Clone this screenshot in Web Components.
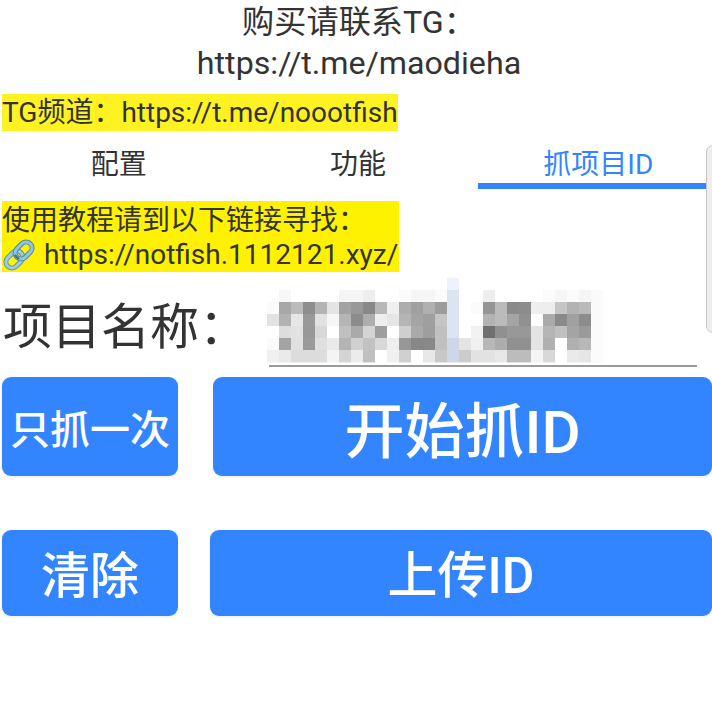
<!DOCTYPE html>
<html lang="zh"><head><meta charset="utf-8"><title>抓项目ID</title>
<style>
html,body{margin:0;padding:0;background:#fff;overflow:hidden;height:714px;width:712px}
body{font-family:Roboto,"Noto Sans CJK SC",sans-serif;color:#333}
</style></head><body>
<app-page>
  <app-banner>
    <span>购买请联系TG&#xFF1A;</span>
    <span>https://t.me/maodieha</span>
  </app-banner>
  <mark-line style="--fs:28px;--lh:37px;--bg:#fff223;margin-top:10px;">TG频道&#xFF1A;https://t.me/noootfish</mark-line>
  <tab-bar></tab-bar>
  <tutorial-note></tutorial-note>
  <name-field></name-field>
  <action-row style="--mt:11px;--h:99px;--w1:176px;--gap:35px;--fs1:40px;--fs2:60px;">
    <action-btn slot="a">只抓一次</action-btn>
    <action-btn slot="b">开始抓ID</action-btn>
  </action-row>
  <action-row style="--mt:54px;--h:86px;--w1:176px;--gap:32px;--fs1:49px;--fs2:50px;--pb:4px;">
    <action-btn slot="a">清除</action-btn>
    <action-btn slot="b">上传ID</action-btn>
  </action-row>
  <side-handle></side-handle>
</app-page>
<script>
function def(name, html, setup){
  customElements.define(name, class extends HTMLElement{
    constructor(){super();const r=this.attachShadow({mode:'open'});r.innerHTML=html;if(setup)setup(r,this);}
  });
}
def('app-page',`<style>:host{display:block;position:relative;width:712px;height:714px;overflow:hidden}</style><slot></slot>`);
def('app-banner',`<style>:host{display:flex;flex-direction:column;align-items:center;font-size:32.2px;line-height:41px;padding:2px 0 0 6px;color:#333}
::slotted(span){display:block;white-space:nowrap}</style><slot></slot>`);
def('mark-line',`<style>:host{display:block;padding-left:2px}
span{display:inline-block;background:var(--bg);font-size:var(--fs);line-height:var(--lh);white-space:nowrap;color:#333}</style><span><slot></slot></span>`);
def('tab-bar',`<style>:host{display:grid;grid-template-columns:repeat(3,239.33px);width:718px;height:58px;font-size:28px;margin-left:-1px}
div{display:flex;align-items:center;justify-content:center;padding-top:4px;box-sizing:border-box;color:#333;white-space:nowrap}
.on{color:#3385ff;border-bottom:6px solid #3385ff;padding:10px 0 0 2px}</style>
<div>配置</div><div>功能</div><div class="on">抓项目ID</div>`);
def('tutorial-note',`<style>:host{display:block;margin-top:12px;padding-left:2px}
.box{display:inline-flex;flex-direction:column;background:#fff200;font-size:28px;line-height:35.5px;color:#333;white-space:nowrap;height:71px;padding-right:1px}
.l{display:flex;align-items:center;height:35.5px}
.t{padding-top:3px;box-sizing:border-box}
svg{width:34px;height:34px;margin-right:8px;margin-top:2px;flex:none}
</style>
<div class="box"><div class="l t">使用教程请到以下链接寻找&#xFF1A;</div>
<div class="l"><svg viewBox="0 0 34 34"><g fill="none" transform="rotate(-45 17 17)">
<rect x="1" y="11" width="19" height="12" rx="6" stroke="#5f93ad" stroke-width="5"/>
<rect x="1" y="11" width="19" height="12" rx="6" stroke="#9ccbe2" stroke-width="3"/>
<rect x="14" y="11" width="19" height="12" rx="6" stroke="#4f87a4" stroke-width="5"/>
<rect x="14" y="11" width="19" height="12" rx="6" stroke="#93c4dc" stroke-width="3"/>
<path d="M14 14v6" stroke="#3f7390" stroke-width="2.4"/></g></svg><span>https://notfish.1112121.xyz/</span></div></div>`);
const rows=[
'ff f7 ff ff ff ff f5 f5 ee ff ff fb f6 f6 fb X ff ff ee ff ff ff ff fb f6 fb f5 fa',
'fb a8 bb 8e b4 e4 a3 98 88 b8 f0 ad a0 b0 9c X ff fb 95 bb 8a 8c ee ee c5 b3 ba fa',
'e2 b2 e6 99 e2 f6 b5 8c ad ee e6 b5 a4 9f c5 X ff ff b3 bb a5 90 ff aa 8a a0 8c fa',
'ff dd e2 98 d8 ff c0 aa d4 9e ff cf aa 9e c0 X ff f2 70 90 98 98 e4 b5 c0 a4 9a fb',
'fb a4 e0 9b e0 ea b4 d0 c2 d8 ee 98 88 88 c0 Y e4 f0 b8 ad 90 90 e4 b0 ff b0 b8 fb',
'f0 ea dc dc dc f4 d4 ec c0 ff f0 d0 ff e8 c8 Y cc e2 e2 e8 bc bc f4 d8 ff ea e6 fb'];
let cells='<rect x="180" y="0" width="12" height="12" fill="#eef2fa"/>';
rows.forEach((r,y)=>r.split(' ').forEach((c,x)=>{
  const f=c==='X'?'#dde4f1':c==='Y'?'#ced7e6':'#'+c+c+c;
  cells+=`<rect x="${x*12}" y="${(y+1)*12}" width="12.4" height="12.4" fill="${f}"/>`;
}));
def('name-field',`<style>:host{display:flex;align-items:flex-start;height:94px;margin-top:0;position:relative}
.lab{font-size:49px;line-height:60px;margin:26px 0 0 3px;white-space:nowrap;color:#333}
.inp{position:absolute;left:269px;top:6px;width:428px;height:87px;border-bottom:2px solid #9a9a9a;box-sizing:content-box}
svg{position:absolute;left:-2px;top:0;display:block;filter:blur(.5px)}
</style><div class="lab">项目名称&#xFF1A;</div><div class="inp"><svg width="336" height="86" viewBox="0 0 336 86">${cells}</svg></div>`);
def('action-row',`<style>:host{display:flex;margin-top:var(--mt);padding-left:2px;gap:var(--gap);height:var(--h);width:710px}
::slotted([slot=a]){width:var(--w1);font-size:var(--fs1);padding-bottom:var(--pb,0)}
::slotted([slot=b]){flex:1;font-size:var(--fs2);padding-bottom:var(--pb,0)}
</style><slot name="a"></slot><slot name="b"></slot>`);
def('action-btn',`<style>:host{display:flex;align-items:center;justify-content:center;background:#3385ff;color:#fff;border-radius:9px;box-shadow:0 1px 3px rgba(0,0,0,.08);white-space:nowrap;font-weight:500;box-sizing:border-box}
</style><slot></slot>`);
def('side-handle',`<style>:host{position:absolute;right:-8px;top:145px;width:14px;height:188px;background:#eee;border:1px solid #c8c8c8;border-radius:8px;box-sizing:border-box}</style>`);
</script>
</body></html>
